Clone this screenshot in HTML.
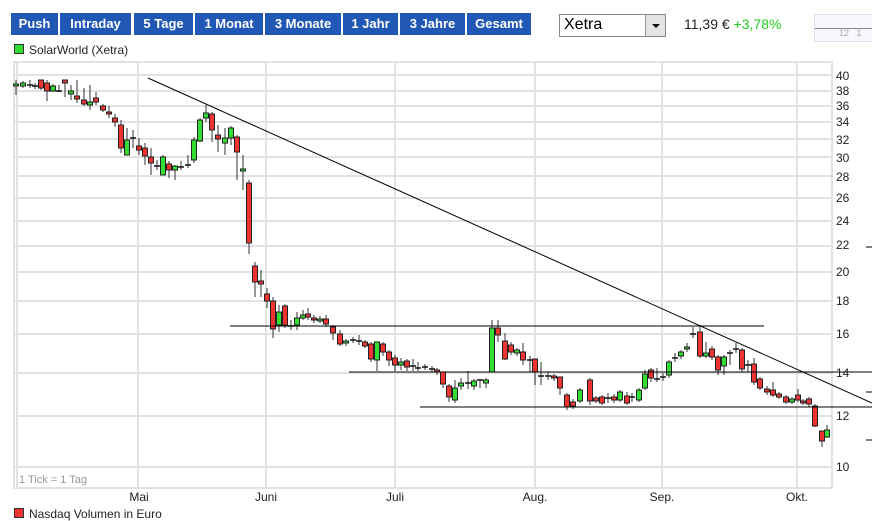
<!DOCTYPE html>
<html><head><meta charset="utf-8"><style>
body{margin:0;width:872px;height:511px;overflow:hidden;background:#fff;font-family:"Liberation Sans",Arial,sans-serif;position:relative}
.b{position:absolute;top:13px;height:22px;background:#2158b6;color:#fff;font-weight:bold;font-size:13px;line-height:22px;text-align:center}
.a{position:absolute;font-size:12px;color:#222}
.m{position:absolute;top:490px;font-size:12px;color:#222;transform:translateX(-50%)}
</style></head><body>
<div class="b" style="left:11px;width:47px">Push</div>
<div class="b" style="left:60px;width:71px">Intraday</div>
<div class="b" style="left:134px;width:59px">5 Tage</div>
<div class="b" style="left:195px;width:68px">1 Monat</div>
<div class="b" style="left:265px;width:76px">3 Monate</div>
<div class="b" style="left:343px;width:55px">1 Jahr</div>
<div class="b" style="left:400px;width:65px">3 Jahre</div>
<div class="b" style="left:467px;width:64px">Gesamt</div>
<div style="position:absolute;left:559px;top:14px;width:105px;height:21px;border:1px solid #888;background:#fff"><span style="position:absolute;left:4px;top:1px;font-size:16px">Xetra</span><div style="position:absolute;right:0;top:0;width:19px;height:21px;background:#e4e4e4;border-left:1px solid #999"><div style="position:absolute;left:6px;top:9px;border-left:4px solid transparent;border-right:4px solid transparent;border-top:4px solid #000"></div></div></div>
<div style="position:absolute;left:684px;top:16px;font-size:14px;color:#222">11,39 € <span style="color:#2c2">+3,78%</span></div>
<div style="position:absolute;left:814px;top:14px;width:58px;height:26px;background:#f6f8fb;border:1px solid #dde"><div style="position:absolute;left:0;top:13px;width:58px;height:1px;background:#888"></div><span style="position:absolute;left:24px;top:13px;font-size:9px;color:#aaa">12 &nbsp; 1</span></div>
<div style="position:absolute;left:14px;top:44px;width:8px;height:8px;background:#3d3;border:1px solid #333"></div>
<div style="position:absolute;left:29px;top:43px;font-size:12px;color:#222">SolarWorld (Xetra)</div>
<svg style="position:absolute;left:0;top:0" width="872" height="511" id="s">
<g stroke="#e2e2e2" stroke-width="2" fill="none">
<rect x="14" y="62" width="818" height="426"/>
<line x1="17" y1="62" x2="17" y2="488"/>
<line x1="138" y1="62" x2="138" y2="488"/><line x1="266" y1="62" x2="266" y2="488"/><line x1="395" y1="62" x2="395" y2="488"/><line x1="535" y1="62" x2="535" y2="488"/><line x1="662" y1="62" x2="662" y2="488"/><line x1="797" y1="62" x2="797" y2="488"/>
<g id="hg"></g>
</g>
<g id="c"></g>
<g stroke="#000" stroke-width="1">
<line x1="148" y1="78" x2="872" y2="403"/>
<line x1="230" y1="326" x2="764" y2="326"/>
<line x1="349" y1="372" x2="872" y2="372"/>
<line x1="420" y1="407" x2="872" y2="407"/>
<line x1="866" y1="392" x2="872" y2="392"/><line x1="866" y1="440" x2="872" y2="440"/><line x1="866" y1="247" x2="872" y2="247"/>
</g>
</svg>
<div class="a" style="left:836px;top:69px">40</div><div class="a" style="left:836px;top:84px">38</div><div class="a" style="left:836px;top:99px">36</div><div class="a" style="left:836px;top:115px">34</div><div class="a" style="left:836px;top:133px">32</div><div class="a" style="left:836px;top:151px">30</div><div class="a" style="left:836px;top:170px">28</div><div class="a" style="left:836px;top:191px">26</div><div class="a" style="left:836px;top:214px">24</div><div class="a" style="left:836px;top:238px">22</div><div class="a" style="left:836px;top:265px">20</div><div class="a" style="left:836px;top:294px">18</div><div class="a" style="left:836px;top:327px">16</div><div class="a" style="left:836px;top:366px">14</div><div class="a" style="left:836px;top:409px">12</div><div class="a" style="left:836px;top:460px">10</div>
<div style="position:absolute;left:19px;top:474px;font-size:11px;color:#999">1 Tick = 1 Tag</div>
<div class="m" style="left:139px">Mai</div><div class="m" style="left:266px">Juni</div><div class="m" style="left:395px">Juli</div><div class="m" style="left:535px">Aug.</div><div class="m" style="left:662px">Sep.</div><div class="m" style="left:797px">Okt.</div>
<div style="position:absolute;left:14px;top:508px;width:8px;height:8px;background:#e33;border:1px solid #333"></div>
<div style="position:absolute;left:29px;top:507px;font-size:12px;color:#222">Nasdaq Volumen in Euro</div>
<script>
var hg='';[75,91,106,122,139,157,176,198,221,246,272,301,334,373,416,467].forEach(function(y){hg+='<line x1="14" y1="'+y+'" x2="832" y2="'+y+'"/>'});
document.getElementById('hg').innerHTML=hg;
var d=[[16,'g',84,86,80,95],[23,'g',83,86,81,88],[30,'f',85,85,80,88],[35,'f',86,86,83,89],[41,'r',80,88,80,90],[47,'r',83,91,80,101],[53,'g',86,91,84,92],[59,'f',91,91,85,92],[65,'r',80,83,80,97],[71,'g',91,94,85,100],[77,'r',96,99,80,103],[84,'r',100,104,88,106],[90,'g',102,105,85,110],[96,'r',98,102,92,105],[103,'r',106,110,104,112],[109,'r',112,114,106,118],[115,'r',118,122,114,127],[121,'r',125,148,120,153],[127,'g',140,155,128,155],[133,'f',138,138,130,148],[139,'r',146,150,138,155],[145,'r',148,156,143,165],[151,'r',157,163,148,175],[157,'f',166,166,160,170],[163,'g',157,175,155,175],[169,'r',164,170,161,178],[175,'g',166,170,165,180],[181,'f',167,167,161,170],[188,'f',165,165,155,168],[194,'g',140,160,137,163],[200,'g',120,141,118,142],[206,'g',113,118,105,122],[212,'r',114,130,112,142],[218,'r',135,139,125,152],[225,'g',138,143,128,155],[231,'g',128,138,126,145],[237,'r',137,152,135,180],[243,'g',169,171,155,190],[249,'r',183,243,180,254],[255,'r',266,282,262,297],[261,'r',281,284,270,297],[267,'r',294,301,288,308],[273,'r',301,329,297,338],[279,'g',312,325,305,332],[285,'r',306,325,304,328],[291,'f',326,326,320,330],[297,'g',318,325,312,330],[303,'g',315,318,310,320],[308,'r',314,317,308,320],[314,'r',318,320,315,323],[320,'g',319,321,316,323],[326,'r',319,324,315,327],[333,'r',327,333,325,340],[340,'r',334,344,330,346],[346,'g',341,343,339,346],[353,'f',340,340,337,343],[359,'f',341,341,335,345],[365,'r',342,346,340,348],[371,'r',344,359,342,362],[377,'g',342,360,342,371],[383,'r',344,352,342,356],[389,'r',352,360,350,366],[395,'r',358,365,355,371],[401,'g',362,365,358,370],[407,'r',361,367,359,371],[413,'f',366,366,359,371],[418,'f',368,368,362,371],[425,'f',367,367,364,370],[432,'f',369,369,366,372],[437,'r',370,372,368,375],[443,'r',372,384,372,388],[449,'r',386,397,384,402],[455,'g',388,400,380,403],[461,'g',383,386,378,390],[468,'f',383,383,371,389],[474,'g',381,386,379,390],[480,'f',380,380,379,388],[486,'g',380,383,378,388],[492,'g',328,372,320,372],[498,'r',328,335,320,342],[505,'r',341,359,333,360],[511,'r',345,352,342,355],[517,'g',350,353,348,356],[523,'r',352,360,343,365],[530,'f',360,360,356,372],[535,'r',359,372,359,385],[541,'f',376,376,362,385],[548,'f',376,376,372,380],[554,'r',376,378,374,381],[560,'r',377,388,377,395],[567,'r',395,407,393,410],[573,'r',402,406,399,409],[580,'g',390,401,388,403],[590,'r',380,401,378,405],[596,'r',398,401,396,403],[602,'r',397,403,395,405],[608,'f',398,398,393,403],[614,'r',397,400,394,403],[620,'g',392,400,390,402],[627,'r',396,403,392,405],[632,'f',397,397,393,402],[639,'g',390,400,388,402],[645,'g',374,388,370,390],[651,'r',370,378,368,382],[657,'f',379,379,368,382],[663,'f',377,377,373,381],[669,'g',362,375,360,378],[675,'f',358,358,353,362],[681,'g',352,356,350,359],[687,'g',347,349,343,352],[693,'f',334,334,327,338],[700,'r',332,356,325,358],[706,'g',353,356,342,358],[712,'r',349,357,346,360],[718,'r',357,370,355,375],[724,'g',357,366,355,375],[730,'f',353,353,350,365],[736,'f',349,349,343,353],[742,'r',350,369,348,372],[748,'f',365,365,360,372],[754,'r',364,382,358,385],[760,'r',379,388,377,390],[767,'r',389,392,386,395],[773,'r',390,395,382,397],[779,'r',394,397,392,399],[786,'r',397,402,395,404],[792,'g',399,402,397,404],[798,'r',395,400,389,402],[803,'r',401,403,399,405],[809,'r',399,404,397,407],[815,'r',406,426,404,427],[822,'r',431,441,431,447],[827,'g',430,437,425,438]];
var h='';d.forEach(function(c){var x=c[0];h+='<line x1="'+x+'" y1="'+c[4]+'" x2="'+x+'" y2="'+c[5]+'" stroke="#333" stroke-width="1"/>';
if(c[1]=='f'){h+='<line x1="'+(x-3)+'" y1="'+c[2]+'" x2="'+(x+3)+'" y2="'+c[2]+'" stroke="#111" stroke-width="1.5"/>';}
else{var hh=Math.max(c[3]-c[2],2);h+='<rect x="'+(x-2.5)+'" y="'+c[2]+'" width="5" height="'+hh+'" fill="'+(c[1]=='g'?'#33dd33':'#ee3333')+'" stroke="#222" stroke-width="1"/>';}});
document.getElementById('c').innerHTML=h;
</script>
</body></html>
